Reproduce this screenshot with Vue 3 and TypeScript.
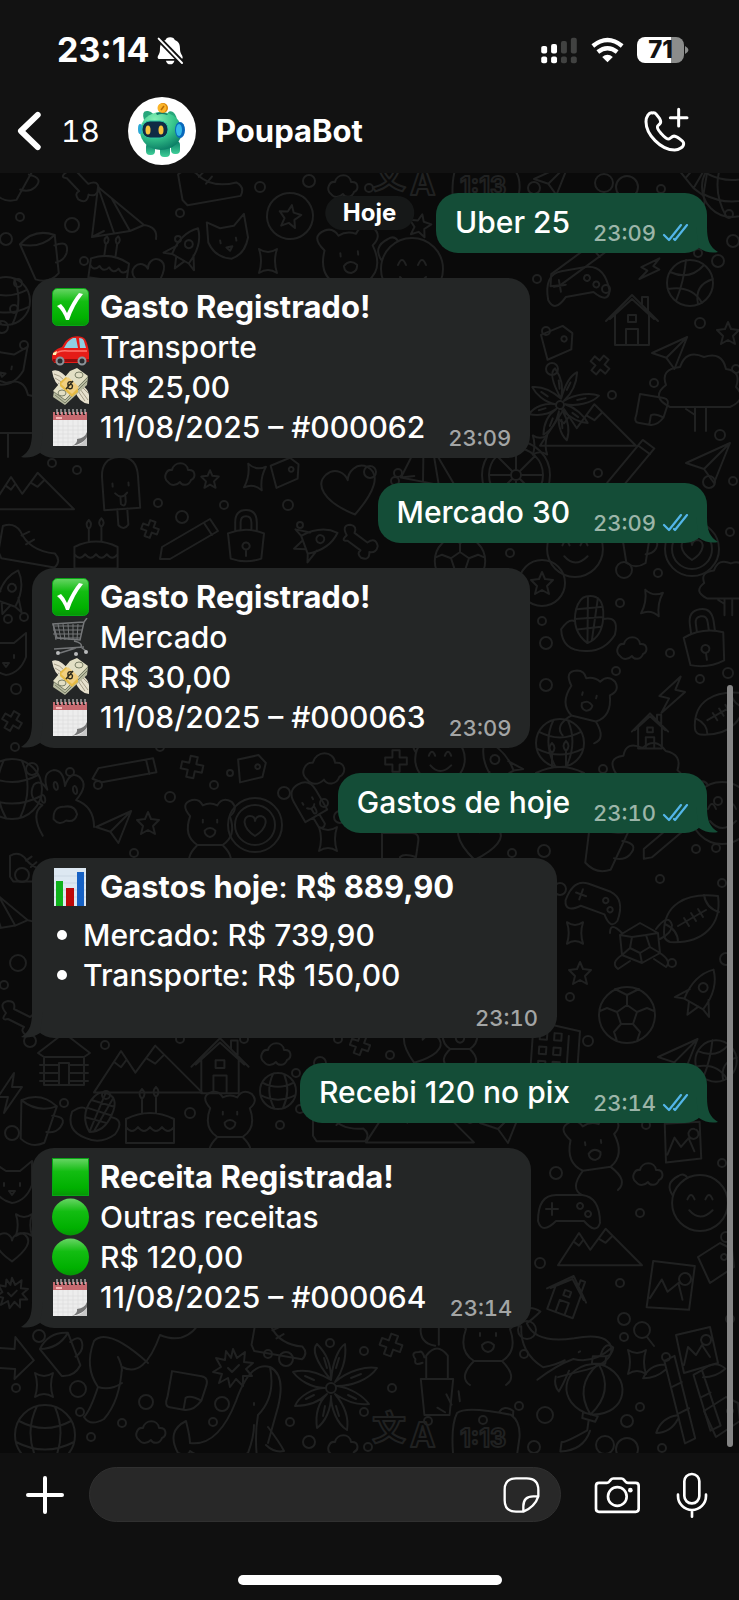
<script setup lang="ts">
import { ref } from 'vue'

type IconName = 'check' | 'car' | 'money' | 'calendar' | 'cart' | 'chart' | 'square' | 'circle'
interface Line { icon: IconName; text: string; bold?: boolean; amount?: string }
interface Message { id: number; out: boolean; time: string; text?: string; lines?: Line[]; items?: string[] }

const iconLabels: Record<IconName, string> = {
  check: 'Confirmado', car: 'Carro', money: 'Dinheiro', calendar: 'Data',
  cart: 'Carrinho', chart: 'Gráfico', square: 'Quadrado verde', circle: 'Círculo verde',
}

const draft = ref('')

const messages: Message[] = [
  { id: 1, out: true, time: '23:09', text: 'Uber 25' },
  { id: 2, out: false, time: '23:09', lines: [
    { icon: 'check', text: 'Gasto Registrado!', bold: true },
    { icon: 'car', text: 'Transporte' },
    { icon: 'money', text: 'R$ 25,00' },
    { icon: 'calendar', text: '11/08/2025 – #000062' },
  ] },
  { id: 3, out: true, time: '23:09', text: 'Mercado 30' },
  { id: 4, out: false, time: '23:09', lines: [
    { icon: 'check', text: 'Gasto Registrado!', bold: true },
    { icon: 'cart', text: 'Mercado' },
    { icon: 'money', text: 'R$ 30,00' },
    { icon: 'calendar', text: '11/08/2025 – #000063' },
  ] },
  { id: 5, out: true, time: '23:10', text: 'Gastos de hoje' },
  { id: 6, out: false, time: '23:10',
    lines: [{ icon: 'chart', text: 'Gastos hoje', bold: true, amount: 'R$ 889,90' }],
    items: ['Mercado: R$ 739,90', 'Transporte: R$ 150,00'] },
  { id: 7, out: true, time: '23:14', text: 'Recebi 120 no pix' },
  { id: 8, out: false, time: '23:14', lines: [
    { icon: 'square', text: 'Receita Registrada!', bold: true },
    { icon: 'circle', text: 'Outras receitas' },
    { icon: 'circle', text: 'R$ 120,00' },
    { icon: 'calendar', text: '11/08/2025 – #000064' },
  ] },
]

// Wallpaper drawings, each centred on its own origin
const shapes: Record<string, string> = {
  sparkle: 'M-9 -12Q0 -6 9 -12Q5 0 9 12Q0 6 -9 12Q-5 0 -9 -12Z',
  burst: 'M0 -19L4 -10L12 -16L11 -6L20 -5L13 1L19 8L10 8L10 18L3 11L-3 19L-5 10L-14 15L-11 6L-20 4L-12 -1L-17 -10L-8 -8L-7 -17L-2 -10ZM-5 0l4 4l7 -7',
  cloud: 'M-12 9c-6 -5 -1 -13 4 -12c2 -9 15 -9 16 0c8 -1 8 8 3 10c-2 6 -9 6 -11 2c-4 4 -9 4 -12 0Z',
  star: 'M0 -11L3 -4L11 -3L5 3L7 11L0 7L-7 11L-5 3L-11 -3L-3 -4Z',
  heart: 'M0 24C-30 4 -32 -14 -20 -21C-9 -27 -1 -18 0 -11C2 -19 12 -27 22 -20C34 -10 24 6 0 24Z',
  cup: 'M-18 -18Q0 -30 18 -18L12 20Q0 28 -12 20ZM-18 -18Q0 -8 18 -18M15 -8q16 -2 10 10q-4 7 -13 7',
  globe: 'M30 0A30 30 0 1 1 -30 0A30 30 0 1 1 30 0ZM-26 -14Q0 0 26 -14M-29 7Q0 22 29 7M-8 -29Q-22 0 -6 29M10 -28Q22 0 8 29',
  ball: 'M28 0A28 28 0 1 1 -28 0A28 28 0 1 1 28 0ZM0 -10L10 -3L6 9L-6 9L-10 -3ZM0 -10V-20L-12 -26M0 -20L12 -26M10 -3L20 -7L27 -4M6 9L13 17L10 26M-6 9L-13 17L-10 26M-10 -3L-20 -7L-27 -4',
  basket: 'M23 0A23 23 0 1 1 -23 0A23 23 0 1 1 23 0ZM-20 -11Q0 -2 14 -18M-14 18Q-6 -2 -4 -23M8 21Q4 2 23 -4M-22 6Q2 2 12 20',
  flower: 'M0 -8C-18 -30 -18 -40 -14 -44C-4 -34 0 -24 0 -8C2 -28 8 -40 14 -44C16 -28 10 -14 4 -6C18 -18 36 -22 46 -20C38 -8 20 -2 6 -2C20 0 32 8 38 16C24 18 10 10 4 6C14 18 18 30 16 42C6 36 0 20 0 8C0 22 -6 34 -14 40C-16 26 -12 14 -4 6C-12 14 -24 18 -36 18C-32 8 -18 0 -6 0C-20 0 -32 -8 -38 -16C-24 -20 -10 -14 0 -8M5 0A5 5 0 1 1 -5 0A5 5 0 1 1 5 0M-7 -30L-4 -20M8 -30L5 -20M30 -14L20 -10M25 11L17 7M8 28L5 18M-8 28L-6 18M-25 11L-17 7M-26 -12L-17 -8',
  house: 'M-22 -4L0 -24L22 -4M-17 -8V22H17V-8M-26 -2L0 -28L26 -2M-6 22V6H6V22M-4 -8H4V-1H-4ZM10 -18V-26H16V-10',
  cabin: 'M-26 -10L0 -30L26 -10L20 -6H-20ZM-20 -6V22H20V-6M-24 2H-6M-24 10H-6M-24 18H-6M6 2H24M6 10H24M6 18H24M-5 22V0H5V22',
  mountain: 'M-60 26L-30 -20L-14 4L8 -26L60 26ZM-38 -8L-30 -2L-24 -10M-2 -12L8 -6L18 -16',
  popsicle: 'M-18 18V-14Q-18 -34 0 -34Q18 -34 18 -14V18ZM-5 18V34Q0 40 5 34V18M-8 -8v3M8 -8v3M-6 2Q0 9 6 2M-1 6v7q4 4 5 -2v-7',
  turtle: 'M0 -20L18 -10L20 10L2 20L-18 12L-20 -8ZM-8 -6L6 -8L10 4L0 10L-10 5ZM-8 -6L-20 -8M6 -8L18 -10M10 4L20 10M0 10L2 20M-10 5L-18 12M16 -14Q28 -30 32 -18Q32 -10 20 -4M-18 -10Q-30 -22 -30 -10M20 10Q32 18 26 24L14 16M-18 12Q-30 20 -22 26L-10 18',
  rugby: 'M-28 14C-28 -12 -8 -26 26 -22C30 6 12 26 -22 24C-28 22 -28 18 -28 14ZM-14 8L14 -8M-8 0l5 8M-1 -5l5 8M6 -9l5 8M-27 6Q-14 12 -14 24M12 -23Q14 -10 27 -6',
  corn: 'M-6 -28Q12 -34 14 -10Q16 10 2 18Q-16 8 -14 -14Q-12 -26 -6 -28ZM-13 -14L12 -20M-14 -4L14 -10M-10 6L13 0M-4 -28L2 18M6 -28L6 14M14 -8Q30 -14 28 6Q20 24 2 26Q-22 30 -26 8Q-20 -4 -14 -2',
  lock: 'M-20 -4Q0 -12 20 -4L17 24Q0 30 -17 24ZM-12 -7V-16Q-12 -30 0 -30Q12 -30 12 -16V-7M-6 -8V-16Q-6 -23 0 -23Q6 -23 6 -16V-9M0 6a4 4 0 1 0 .1 0M0 14v7',
  paw: 'M-26 30Q-34 6 -20 0Q-34 -10 -24 -22Q-16 -26 -12 -14Q-14 -32 -2 -32Q8 -30 6 -14Q14 -28 22 -20Q30 -10 14 2Q30 12 26 32M-12 16Q-10 4 0 6Q12 6 12 16Q8 24 0 20Q-8 24 -12 16M-18 -10a2 4 0 1 0 .1 0M-3 -20a2 4 0 1 0 .1 0M15 -12a2 4 0 1 0 .1 0',
  badge: 'M27 0A27 27 0 1 1 -27 0A27 27 0 1 1 27 0ZM20 0A20 20 0 1 1 -20 0A20 20 0 1 1 20 0ZM0 11C-14 2 -12 -9 -5 -9Q0 -9 0 -4Q1 -9 6 -9C13 -8 13 3 0 11Z',
  starring: 'M23 0A23 23 0 1 1 -23 0A23 23 0 1 1 23 0ZM0 -11L3 -4L11 -3L5 3L7 11L0 7L-7 11L-5 3L-11 -3L-3 -4Z',
  bear: 'M-22 -12Q-34 -26 -20 -30Q-12 -32 -8 -24Q0 -28 8 -24Q14 -34 24 -28Q32 -20 22 -12Q30 10 14 20H-14Q-30 10 -22 -12ZM-8 -8v3M8 -8v3M-6 4Q0 -2 6 4Q6 10 0 11Q-6 10 -6 4ZM-14 20Q-30 36 -18 44M14 20Q30 36 18 44',
  lantern: 'M-6 -34L8 -36L8 -28L-6 -26ZM1 -27C-40 -22 -38 22 0 27C40 24 40 -22 1 -27ZM1 -27Q-22 0 0 27M1 -27Q22 0 0 27M-8 26L8 28L6 34L-8 32ZM2 -36Q4 -52 14 -46Q14 -38 8 -36M-1 34V44Q-22 60 -26 60V70Q-2 66 2 44',
  bamboo: 'M-12 -40L0 -44L10 50L-2 54ZM-8 -10L4 -14M-4 20L8 16M18 -20L28 -24L40 40L28 44ZM22 6L34 2M-12 -36Q-30 -38 -38 -24Q-24 -22 -12 -30M-6 22Q-24 22 -32 38Q-16 40 -6 26M28 -24Q44 -34 54 -22Q42 -14 28 -16',
  photo: 'M-20 -14L14 -22L22 14L-12 24ZM-12 16L-8 -2L0 6L6 -4L14 8M10 -14a5 5 0 1 0 .1 0',
  whale: 'M-50 36Q-62 14 -42 4Q-38 20 -38 26Q-10 30 8 -16Q22 -56 42 -50Q58 -42 50 -10Q46 4 40 26M-50 36Q-40 40 -38 34Q-10 52 20 36Q26 20 26 8M30 50Q26 20 30 -2M40 10Q52 26 56 34Q46 36 38 28M42 -50Q48 -20 30 -2M26 -14v2',
  cactus: 'M-18 0H18L14 40H-14ZM-12 0V-26Q0 -42 12 -26V0M-2 -37Q-20 -40 -18 -58Q-8 -72 2 -58V-38M-16 -18Q-26 -14 -24 -22Q-30 -30 -20 -30Q-16 -32 -14 -24',
  legs: 'M-30 -30Q-40 -4 -26 16Q-34 40 -40 46Q-34 56 -20 48Q-4 30 -2 -4Q20 8 36 -36Q60 -26 74 -46M-30 -30Q-16 -44 24 -8M-26 16Q-14 20 -2 12M-6 -14Q-2 -6 -2 0',
  arrow: 'M-20 -8H0V-20L20 2L2 22V12H-20',
  rocket: 'M0 -30Q16 -14 12 14H-12Q-16 -14 0 -30ZM-12 2L-22 18L-12 14M12 2L22 18L12 14M-6 14L0 28L6 14M0 -12a5 5 0 1 0 .1 0',
  hat: 'M-30 20L-24 -30L22 8L8 14ZM-24 -30L-8 16M-10 -18L8 14M-30 20L-18 14M22 8Q36 10 34 22',
  bone: 'M-16 -6q-8 -10 2 -12q8 0 6 8L8 -2q8 -8 12 2q0 8 -8 8q2 10 -8 8q-6 -4 -2 -8L-14 0q-8 2 -2 -6Z',
  pencil: 'M-30 10L18 -18L26 -6L-22 22L-32 22ZM12 -14L20 -2',
  tree: 'M-30 22Q-50 12 -34 0Q-40 -16 -20 -18Q-14 -36 4 -28Q22 -34 26 -16Q42 -14 36 2Q48 14 30 22ZM-5 22V46M6 22V46M-5 30L-14 24',
  wheel: 'M34 0A34 34 0 1 1 -34 0A34 34 0 1 1 34 0ZM27 0A27 27 0 1 1 -27 0A27 27 0 1 1 27 0ZM5 0A5 5 0 1 1 -5 0A5 5 0 1 1 5 0ZM0 -5V-27M0 5V27M5 0H27M-5 0H-27M4 -4L19 -19M-4 4L-19 19M4 4L19 19M-4 -4L-19 -19',
  face: 'M31 0A31 31 0 1 1 -31 0A31 31 0 1 1 31 0ZM-14 -4q4 -10 8 0M6 -4q4 -10 8 0M-12 8Q0 22 14 8M-30 -8Q-40 -22 -24 -30Q-18 -34 -14 -28',
  fox: 'M-18 -20L-6 -12H8L20 -22L20 2Q14 18 0 20Q-16 16 -20 0ZM-8 0v3M8 0v3M-3 8h6l-3 4Z',
  building: 'M-26 40V-34L26 -26V40M-18 -22h8v8h-8ZM-2 -22h8v8h-8ZM-18 -6h8v8h-8ZM-2 -6h8v8h-8ZM-18 10h8v8h-8ZM-2 10h8v8h-8ZM14 -20v50',
  cake: 'M-24 24V0Q0 -12 24 0V24ZM-24 8q6 8 12 0q6 8 12 0q6 8 12 0q6 8 12 0M-8 -6V-20M6 -6V-22M-8 -20q-5 -5 0 -10q5 5 0 10M6 -22q-5 -5 0 -10q5 5 0 10',
  bolt: 'M4 -20L-12 4H-2L-6 20L12 -6H2Z',
  cross: 'M-4 -12H4V-4H12V4H4V12H-4V4H-12V-4H-4Z',
  tag: 'M-18 -6L4 -20L16 -14L18 4L-6 20ZM8 -9a3 3 0 1 0 .1 0',
  glass: 'M6 0A8 8 0 1 1 -10 0A8 8 0 1 1 6 0ZM3 7L10 16',
  clock: 'M-28 34Q-34 0 -28 -14Q-20 -22 26 -16Q36 -10 36 6L34 34M14 -18q4 -8 14 -2v5M-40 -14l-8 -4M-34 -22l-6 -10M-26 -26l-2 -10',
  note: 'M-18 -16H12Q20 -16 18 -6L16 8Q10 20 0 20H-14Q-20 20 -18 10ZM0 20V8Q4 4 16 8',
  controller: 'M-30 10Q-30 -16 -12 -16H14Q32 -14 32 12Q28 24 16 10H-12Q-26 24 -30 10ZM-16 -8v12M-22 -2h12M12 -8a3 3 0 1 0 .1 0M20 0a3 3 0 1 0 .1 0',
  plane: 'M-20 0L24 -20L8 20L-2 6ZM-2 6L24 -20',
  shoe: 'M-30 12V-14Q-20 -20 -12 -12Q0 6 26 4Q34 10 28 18H-26ZM-10 -8l7 -5M-4 0l7 -6',
}

type Doodle = [string, number, number, number, number]
const doodles: Doodle[] = [
  // upper rows
  ['cup', 12, 4, 1, 20], ['hat', 122, 44, 1, 0], ['cloud', 343, 12, 1, 0], ['starring', 290, 43, 1, 10],
  ['shoe', 210, 10, 1, -10], ['cup', 42, 84, 1, -15], ['fox', 228, 66, 1, -10], ['star', 420, 52, 1, 12],
  ['bone', 80, 10, 1, 20], ['face', 412, 96, 1, 0], ['bear', 350, 88, 1.1, -6], ['pencil', 580, 88, 1, -6],
  ['basket', 690, 110, 1, 0], ['bolt', 650, 96, .7, 30], ['heart', 150, 102, .6, -18], ['cake', 110, 88, .8, 8],
  ['hat', 700, 4, .8, 60], ['plane', 550, 6, .8, 0], ['globe', 732, 14, 1, 0], ['sparkle', 268, 88, 1, 0], ['rocket', 186, 76, .8, 30],
  ['globe', 6, 128, .8, 0], ['fox', 4, 192, 1, 10], ['tree', 2, 238, 1, 0],
  ['controller', 576, 112, 1, -10], ['house', 632, 150, 1, 0], ['cross', 600, 192, .8, 40], ['tag', 556, 170, .9, 10],
  ['tree', 700, 212, 1, 0], ['mountain', 588, 252, .8, 0], ['flower', 560, 232, .8, 10], ['note', 652, 236, .8, 10],
  ['sparkle', 540, 272, .8, 0], ['plane', 668, 180, .8, 0], ['star', 728, 160, 1, 0],
  // beside the second message
  ['popsicle', 121, 318, 1, -4], ['mountain', 32, 318, .7, 0], ['cloud', 180, 300, 1, 0], ['sparkle', 255, 304, 1, 10],
  ['heart', 350, 318, 1, -12], ['tag', 284, 300, .8, 10], ['star', 210, 306, .8, 0], ['lock', 246, 364, .9, 0],
  ['pencil', 192, 364, 1, 0], ['rocket', 315, 368, .8, 70], ['wheel', 516, 302, 1, 0], ['hat', 436, 296, 1, 20],
  ['pencil', 632, 290, 1, -20], ['plane', 706, 290, 1, 0], ['shoe', 30, 372, 1, 10], ['cake', 96, 374, .9, 0],
  ['cross', 150, 356, .7, 20], ['ball', 460, 388, .9, 0], ['face', 575, 376, .9, 0], ['badge', 692, 376, 1, 0],
  ['rocket', 10, 420, .8, 20], ['bone', 360, 370, .9, 10], ['starring', 542, 410, 1, 0], ['cup', 636, 374, .8, 0],
  ['corn', 588, 452, 1, 8], ['lock', 704, 466, 1, -8], ['sparkle', 652, 430, 1, 10], ['cloud', 632, 474, 1, 0],
  ['bolt', 672, 522, 1, 14], ['rugby', 720, 540, .9, 0], ['bear', 588, 528, .9, 14], ['house', 650, 560, .7, 0],
  ['globe', 560, 570, .8, 0], ['fox', 6, 482, 1, 0], ['cross', 12, 548, .8, 30], ['tree', 728, 410, .7, 0],
  // middle rows
  ['paw', 62, 628, 1, -12], ['globe', 12, 616, 1, 0], ['pencil', 130, 596, 1, 20], ['cross', 192, 594, .9, 12],
  ['tag', 250, 596, .8, 20], ['bear', 210, 654, .9, 0], ['badge', 255, 652, 1, 0],
  ['cloud', 324, 594, 1.4, 0], ['sparkle', 328, 666, 1, 0], ['popsicle', 310, 632, .7, -30], ['plane', 112, 654, .8, 0],
  ['star', 148, 650, 1, 0], ['cross', 396, 588, .9, 0], ['face', 440, 586, .8, 0], ['rocket', 498, 592, .9, -30],
  ['cake', 560, 600, 1, 0], ['tree', 650, 598, .9, 30], ['cup', 604, 672, 1.1, 16], ['face', 722, 640, 1, 0],
  ['pencil', 666, 664, .8, -10], ['shoe', 34, 694, .8, 0], ['hat', 8, 740, .9, 0], ['note', 400, 676, 1, 0],
  ['heart', 478, 668, .8, 10], ['rugby', 692, 745, 1, 0], ['turtle', 640, 770, 1, 0], ['controller', 594, 728, .9, 20],
  ['ball', 627, 842, 1, 0], ['star', 580, 800, 1, 0], ['building', 555, 880, .9, 4], ['rocket', 700, 820, .9, 30],
  ['basket', 716, 888, .9, 0], ['sparkle', 575, 760, .9, 0], ['bone', 22, 846, 1, 0], ['plane', 676, 884, .9, 0],
  ['cabin', 64, 890, 1, 0], ['mountain', 148, 896, .9, 0], ['house', 220, 896, 1.1, 0], ['cloud', 276, 880, 1, 0],
  ['cross', 360, 872, .8, 20], ['globe', 278, 918, .6, 0], ['heart', 420, 874, .7, 20], ['bear', 460, 862, .7, 0],
  ['bolt', 10, 920, 1, 0], ['cake', 150, 946, 1, 0], ['bear', 230, 946, .9, 0], ['cup', 36, 948, 1, 10],
  ['corn', 96, 944, .9, 30], ['mountain', 420, 946, .9, 0], ['shoe', 340, 952, .9, 0], ['plane', 500, 950, 1, 0],
  // lower rows
  ['bear', 594, 976, 1, -8], ['photo', 682, 968, 1, 10], ['face', 700, 1030, .9, 0], ['controller', 568, 1038, 1, 0],
  ['mountain', 600, 1074, .7, 0], ['cloud', 648, 1000, 1, 0], ['fox', 12, 1010, 1, 0], ['heart', 12, 1074, .6, 0],
  ['house', 566, 1124, .8, 20], ['photo', 670, 1112, 1.2, 20], ['sparkle', 24, 1052, .9, 0], ['burst', 12, 1120, .8, 0],
  ['whale', 560, 1166, .8, 60], ['tag', 716, 1090, 1, 0],
  ['arrow', 14, 1184, 1, 4], ['cup', 62, 1182, .9, -30], ['legs', 124, 1198, 1, 0], ['note', 187, 1217, 1, 10],
  ['burst', 233, 1195, 1, 0], ['sparkle', 44, 1212, 1, 0], ['whale', 228, 1244, 1, 0], ['flower', 331, 1215, 1, 0],
  ['cross', 391, 1172, .9, 20], ['cactus', 437, 1206, .9, 0], ['lantern', 594, 1216, .95, 8], ['sparkle', 637, 1189, 1, 0],
  ['bamboo', 680, 1222, .9, -8], ['photo', 696, 1176, 1, 0], ['glass', 644, 1157, 1, 0], ['globe', 45, 1262, 1, 0],
  ['cloud', 151, 1258, 1, 0], ['cloud', 343, 1272, 1, 0], ['shoe', 280, 1166, .9, 10], ['clock', 484, 1256, 1, 4],
  ['bear', 488, 1168, 1, 0], ['clock', 484, 8, 1, 4], ['tag', 722, 1244, 1, 0],
]

const dots: [number, number, number][] = [
  [309, 8, 6], [369, 15, 4], [534, 15, 6], [604, 10, 9], [627, 14, 11], [661, 16, 4], [729, 41, 4], [733, 68, 6], [698, 80, 4],
  [718, 88, 6], [537, 106, 4], [260, 14, 5], [180, 40, 4], [72, 52, 7], [20, 44, 4], [6, 66, 6], [178, 66, 3], [84, 88, 4],
  [18, 110, 4], [14, 136, 4], [2, 154, 6], [24, 172, 4], [546, 158, 4], [606, 116, 4], [700, 150, 5], [654, 210, 4], [736, 196, 4],
  [612, 222, 4], [552, 196, 6], [720, 262, 5], [52, 290, 4], [77, 297, 4], [158, 330, 4], [182, 344, 6], [224, 332, 4], [288, 332, 5],
  [300, 352, 3], [395, 308, 4], [370, 299, 6], [398, 300, 4], [598, 300, 4], [709, 309, 6], [733, 308, 4], [730, 359, 4], [510, 380, 4],
  [624, 397, 8], [658, 400, 4], [542, 448, 4], [546, 470, 6], [620, 430, 4], [670, 480, 4], [728, 500, 5], [616, 498, 4], [546, 512, 6],
  [700, 506, 4], [8, 446, 4], [24, 444, 4], [16, 516, 5], [15, 574, 4], [32, 596, 6], [70, 599, 4], [160, 574, 4], [214, 612, 4],
  [284, 620, 6], [98, 612, 4], [170, 624, 5], [134, 680, 4], [324, 630, 4], [340, 644, 6], [230, 600, 3], [603, 596, 4], [718, 628, 4],
  [544, 678, 6], [696, 676, 4], [716, 675, 4], [512, 680, 4], [22, 702, 7], [18, 790, 8], [4, 812, 4], [560, 716, 6], [660, 706, 4],
  [722, 710, 4], [570, 824, 4], [588, 868, 5], [672, 790, 4], [726, 786, 6], [30, 868, 6], [105, 872, 4], [244, 866, 4], [106, 922, 4],
  [180, 866, 4], [320, 890, 6], [296, 900, 4], [338, 866, 4], [390, 882, 4], [190, 940, 5], [64, 930, 4], [280, 952, 4], [300, 936, 4],
  [376, 940, 5], [470, 946, 4], [536, 944, 4], [12, 960, 7], [646, 952, 4], [556, 1000, 6], [640, 1040, 4], [722, 990, 4], [540, 1090, 5],
  [620, 1110, 4], [726, 1064, 5], [730, 1146, 4], [624, 1146, 6], [39, 1163, 6], [78, 1216, 8], [16, 1215, 4], [146, 1229, 7],
  [222, 1231, 7], [268, 1181, 4], [286, 1186, 7], [330, 1170, 4], [364, 1178, 4], [392, 1215, 4], [519, 1233, 4], [545, 1242, 8],
  [483, 1247, 4], [627, 1248, 6], [524, 1181, 4], [527, 1157, 9], [624, 1164, 4], [666, 1184, 4], [640, 1234, 4], [309, 1269, 6],
  [213, 1249, 4], [122, 1250, 4], [80, 1239, 4], [91, 1264, 4], [534, 1274, 6], [605, 1272, 9], [627, 1276, 11], [662, 1275, 4],
  [290, 1249, 4], [364, 1239, 4], [428, 1248, 4], [368, 1274, 4],
]
</script>

<template>
  <div class="phone">
    <header class="top">
      <div class="status">
        <span class="clock">23:14</span>
        <svg class="bell" width="27" height="29" viewBox="470 105 82 86" aria-hidden="true">
          <path fill="#fff" d="M510 108c-8 0-13 4-14 8c-14 5-17 16-17 30c0 14-7 16-7 24q0 4 5 4h66q5 0 5-4c0-8-8-12-8-24c0-16-3-25-16-30c-1-4-6-8-14-8zM497 179h26q-3 11-13 11t-13-11z" />
          <path stroke="#121212" stroke-width="17" d="M470 107L552 191" />
          <path stroke="#fff" stroke-width="6" stroke-linecap="round" d="M475 112L546 186" />
        </svg>
        <div class="indicators">
          <svg width="38" height="27" viewBox="513 106 114 82" aria-hidden="true">
            <g fill="#fff"><rect x="516" y="133" width="18" height="23" rx="6" /><rect x="546" y="127" width="18" height="29" rx="6" /><rect x="516" y="165" width="18" height="21" rx="6" /><rect x="546" y="165" width="18" height="21" rx="6" /></g>
            <g fill="#414241"><rect x="576" y="118" width="18" height="38" rx="6" /><rect x="606" y="108" width="18" height="48" rx="6" /><rect x="576" y="165" width="18" height="21" rx="6" /><rect x="606" y="165" width="18" height="21" rx="6" /></g>
          </svg>
          <svg class="wifi" width="33" height="26" viewBox="666 108 98 78" aria-hidden="true">
            <g fill="none" stroke="#fff" stroke-width="13"><path d="M671 135Q715 99 759 135" /><path d="M686 153Q715 130 744 153" /></g>
            <path fill="#fff" d="M715 184L699 168Q715 155 731 168Z" />
          </svg>
          <div class="battery">71</div>
          <svg width="5" height="8" viewBox="0 0 5 8" aria-hidden="true"><path fill="#8b8c8b" d="M1 0Q8 4 1 8Z" /></svg>
        </div>
      </div>
      <div class="nav">
        <button class="back" type="button" aria-label="Voltar, 18 não lidas">
          <svg width="25" height="40" viewBox="50 334 76 120" aria-hidden="true"><path fill="none" stroke="#fff" stroke-width="18" stroke-linecap="round" stroke-linejoin="round" d="M113 345L62 394L113 443" /></svg>
          <span>18</span>
        </button>
        <svg class="avatar" width="68" height="68" viewBox="0 0 68 68" role="img" aria-label="PoupaBot">
          <defs>
            <radialGradient id="body" cx=".35" cy=".2" r=".85"><stop offset="0" stop-color="#85f0b5" /><stop offset=".55" stop-color="#36c58b" /><stop offset="1" stop-color="#087963" /></radialGradient>
            <linearGradient id="leg" x2="0" y2="1"><stop stop-color="#087a63" /><stop offset="1" stop-color="#3fcf98" /></linearGradient>
          </defs>
          <circle cx="34" cy="34" r="34" fill="#fff" />
          <g fill="url(#leg)"><rect x="43" y="44" width="9" height="13" rx="4" /><rect x="18" y="46" width="9" height="12" rx="4" /><rect x="32" y="47" width="10" height="13" rx="4" /></g>
          <path fill="#27a77b" d="M16 23Q13 13 20 14Q25 15 27 20ZM38 20Q40 12 45 15Q50 19 48 26Z" />
          <ellipse cx="33" cy="34" rx="21" ry="19" fill="url(#body)" />
          <path fill="#137a65" d="M28 16Q34 14 40 17L39 18Q34 16 29 18Z" />
          <ellipse cx="52" cy="33" rx="5" ry="8" fill="#0868bb" /><ellipse cx="51" cy="33" rx="3" ry="6" fill="#35b8e7" />
          <ellipse cx="12" cy="32" rx="2" ry="5" fill="#2ca8d5" />
          <rect x="14" y="24" width="26" height="17" rx="8" fill="#102b45" stroke="#2bc3a2" />
          <ellipse cx="20" cy="33" rx="2.5" ry="4.5" fill="#f7c33e" /><ellipse cx="33" cy="33" rx="2.5" ry="4.5" fill="#f7c33e" />
          <circle cx="35" cy="11" r="5" fill="#d98607" /><circle cx="34" cy="11" r="4.5" fill="#fbb429" /><path stroke="#b96d06" stroke-width="1.5" d="M33 13L36 9" />
        </svg>
        <h1>PoupaBot</h1>
        <button class="call" type="button" aria-label="Ligar">
          <svg width="45" height="45" viewBox="825 318 135 135" aria-hidden="true">
            <g fill="none" stroke="#fff" stroke-width="9" stroke-linecap="round" stroke-linejoin="round">
              <path d="M850 336C840 333 831 348 831 362C831 400 875 447 917 447C930 447 944 438 944 428C944 420 935 416 925 409C918 404 912 404 907 409L902 413C897 417 885 408 877 398C870 390 862 382 866 375L873 368C877 363 875 358 872 353L862 340C859 336 855 334 850 336Z" />
              <path d="M929 325V375M904 350H954" />
            </g>
          </svg>
        </button>
      </div>
    </header>

    <main class="chat">
      <svg class="wallpaper" viewBox="0 0 739 1280" preserveAspectRatio="xMidYMin slice" aria-hidden="true">
        <path v-for="(d, i) in doodles" :key="i" :d="shapes[d[0]]" :transform="`translate(${d[1]} ${d[2]}) rotate(${d[4]}) scale(${d[3]})`" />
        <circle v-for="(c, i) in dots" :key="'c' + i" :cx="c[0]" :cy="c[1]" :r="c[2]" />
        <g v-for="y in [18, 1270]" :key="y">
          <text x="372" :y="y - 3" font-size="34">文</text>
          <text x="410" :y="y + 4" font-size="34">A</text>
          <text x="460" :y="y + 4" font-size="25">1:13</text>
        </g>
      </svg>

      <div class="day">Hoje</div>

      <article v-for="m in messages" :key="m.id" class="bubble" :class="[m.out ? 'out' : 'in', { stacked: m.items }]">
        <svg class="tail" width="22" height="26" viewBox="0 0 22 26" aria-hidden="true"><path d="M11 0C11 14 14 20 22 25Q12 27 3 21L0 0Z" /></svg>
        <p v-if="m.text" class="text">{{ m.text }}</p>
        <div v-else class="body">
          <p v-for="(l, i) in m.lines" :key="i" class="line">
            <svg class="icon" width="37" height="38" viewBox="0 0 37 38" role="img" :aria-label="iconLabels[l.icon]">
              <template v-if="l.icon === 'check'">
                <rect x=".5" y=".5" width="36" height="37" rx="5" fill="url(#green)" stroke="#08a615" />
                <path fill="#fff" d="M5 18L9 16Q13 20 15 25Q21 12 27 5L31 6Q22 17 17 32H14Q11 23 5 18Z" />
              </template>
              <template v-else-if="l.icon === 'car'">
                <path fill="#e51c17" d="M0 29Q0 22 10 19Q14 11 20 9Q29 7 33 11Q36 16 37 25V32Q35 35 31 35H4Q0 35 0 29Z" />
                <path fill="#8fd0e2" d="M12 20Q16 12 21 10H24L26 20ZM27 10Q31 10 32 13L34 20H28Z" />
                <path fill="none" stroke="#ff746c" stroke-width="1.5" d="M3 26Q8 22 16 23H35" />
                <path fill="#920d0d" d="M1 31H37V34H1Z" /><path fill="#fff5b0" d="M1 25L5 23L4 27H1Z" />
                <g fill="#292b2e" stroke="#8d9398" stroke-width="2"><circle cx="8" cy="33" r="3.5" /><circle cx="30" cy="33" r="3.5" /></g>
              </template>
              <template v-else-if="l.icon === 'money'">
                <path fill="#e6e0cd" d="M0 3Q5 1 10 5L17 11L11 20Q2 17 0 3ZM23 23L31 18Q39 23 37 36Q27 35 23 23Z" />
                <path fill="none" stroke="#a49d87" d="M2 6Q8 7 13 13M3 10L11 15M6 15L11 18M26 23L33 33M28 21L36 32M31 20L36 25" />
                <path fill="#b7ba9f" d="M18 4L25 1L36 9L35 17L13 37L1 29L2 23Z" />
                <path fill="#e2dfc4" d="M18 3L25 0L36 8L13 32L1 23Z" />
                <g fill="none" stroke="#797f67"><path d="M2 24L13 32L36 9M3 27L13 35L35 13" /><ellipse cx="27" cy="7" rx="4" ry="3" /><ellipse cx="10" cy="25" rx="4" ry="3" /></g>
                <path fill="#e4ba45" d="M14 9L26 19V24L20 29L8 18V14Z" /><path fill="#f1cf80" d="M16 9L27 19L20 26L9 16Z" />
                <path fill="none" stroke="#2d2a1c" stroke-width="1.5" d="M20 14Q15 13 16 17Q22 15 20 20Q18 22 15 19M21 13L14 21" />
              </template>
              <template v-else-if="l.icon === 'calendar'">
                <path fill="#ededed" d="M1 4H35V38H1Z" /><path stroke="#d5d5d5" stroke-width=".5" d="M1 18H35M1 22H35M1 26H35M1 30H35M1 34H35M6 12V38M11 12V38M16 12V38M21 12V38M26 12V38M31 12V38" />
                <path fill="#c66a70" d="M1 4H35V12H1Z" /><path stroke="#f5b8b8" stroke-width="2" d="M4 10H10" />
                <path fill="none" stroke="#222" stroke-width="2" d="M4 3V7M8 3V7M12 3V7M16 3V7M20 3V7M24 3V7M28 3V7M32 3V7" />
                <path fill="none" stroke="#ddd" d="M5 1V6M9 1V6M13 1V6M17 1V6M21 1V6M25 1V6M29 1V6M33 1V6" />
                <path fill="#777" d="M20 38Q26 35 25 31Q33 30 35 24V30Q30 36 20 38Z" /><path fill="#c8c8c8" d="M23 38Q32 36 35 29V38Z" />
              </template>
              <template v-else-if="l.icon === 'cart'">
                <g fill="none" stroke="#747678" stroke-width="1"><path d="M1 8H31M1 12H30M1 16H30M3 20H29M1 6L4 22M6 6L9 22M11 6L13 22M16 6L17 22M21 6V22M26 6L25 22" /><path stroke-width="1.5" d="M35 0L32 4L28 22L5 20L1 6L32 4M22 23Q31 25 29 29L34 33M2 31L32 29M8 35L24 30" /></g>
                <g fill="#b9babb"><circle cx="6" cy="35" r="2" /><circle cx="24" cy="36" r="2" /><circle cx="34" cy="34" r="2" /></g>
              </template>
              <template v-else-if="l.icon === 'chart'">
                <path fill="#dde8f2" d="M2 0H34V38H2Z" /><path stroke="#bac8d7" stroke-width=".5" d="M2 8H34M2 15H34M2 22H34M2 29H34" />
                <path fill="#0fb21b" d="M4 13H11V38H4Z" /><path fill="#bd0909" d="M14 20H22V38H14Z" /><path fill="#1661c4" d="M25 4H32V38H25Z" />
              </template>
              <rect v-else-if="l.icon === 'square'" x=".5" y=".5" width="36" height="37" fill="url(#green)" stroke="#08a615" />
              <ellipse v-else cx="18.5" cy="19" rx="18.5" ry="18.5" fill="url(#green)" />
            </svg>
            <span><strong v-if="l.bold">{{ l.text }}</strong><template v-else>{{ l.text }}</template><template v-if="l.amount">: <strong>{{ l.amount }}</strong></template></span>
          </p>
          <ul v-if="m.items"><li v-for="item in m.items" :key="item">{{ item }}</li></ul>
        </div>
        <div class="meta">
          <time>{{ m.time }}</time>
          <svg v-if="m.out" width="27" height="18" viewBox="0 0 27 18" role="img" aria-label="Lida"><path fill="none" stroke="#53b5e8" stroke-width="2.2" stroke-linecap="round" stroke-linejoin="round" d="M2 11L7 16L19 1M12 15L13 16L25 1" /></svg>
        </div>
      </article>
      <div class="scroll"></div>
    </main>

    <footer>
      <form class="composer" @submit.prevent>
        <button type="button" aria-label="Anexar"><svg width="38" height="38" viewBox="0 0 38 38" aria-hidden="true"><path stroke="#fff" stroke-width="4" stroke-linecap="round" d="M19 2V36M2 19H36" /></svg></button>
        <div class="field">
          <input v-model="draft" type="text" aria-label="Mensagem" />
          <button type="button" aria-label="Figurinhas">
            <svg width="37" height="37" viewBox="402 107 111 111" aria-hidden="true"><path fill="none" stroke="#fff" stroke-width="7" stroke-linejoin="round" d="M441 114H473Q508 114 508 149V168Q498 199 463 214H441Q407 214 407 180V148Q407 114 441 114ZM463 213V198Q463 168 493 168H508" /></svg>
          </button>
        </div>
        <button class="camera" type="button" aria-label="Câmera">
          <svg width="47" height="38" viewBox="677 106 141 113" aria-hidden="true"><g fill="none" stroke="#fff" stroke-width="8" stroke-linejoin="round"><path d="M692 126H716Q721 126 724 121L727 117Q730 113 735 113H759Q764 113 767 117L771 122Q774 126 779 126H802Q811 126 811 135V204Q811 213 802 213H692Q683 213 683 204V135Q683 126 692 126Z" /><circle cx="747" cy="167" r="28" /></g><circle cx="786" cy="148" r="7" fill="#fff" /></svg>
        </button>
        <button class="mic" type="button" aria-label="Gravar áudio">
          <svg width="32" height="46" viewBox="920 90 96 138" aria-hidden="true"><g fill="none" stroke="#fff" stroke-width="8" stroke-linecap="round"><rect x="945" y="96" width="45" height="88" rx="22" /><path d="M926 158V162A42 42 0 0 0 1010 162V158M968 204V224" /></g></svg>
        </button>
      </form>
      <div class="home"></div>
    </footer>

    <svg class="defs" width="0" height="0" aria-hidden="true">
      <linearGradient id="green" x2="0" y2="1"><stop stop-color="#68d565" /><stop offset=".35" stop-color="#13bd12" /><stop offset=".8" stop-color="#00b000" /><stop offset="1" stop-color="#079507" /></linearGradient>
    </svg>
  </div>
</template>

<style>
body { margin: 0; background: #101010; }
</style>

<style scoped>
.phone { position: relative; display: flex; flex-direction: column; min-height: 100vh; background: #101010; color: #fff; font-family: Inter, "Liberation Sans", sans-serif; font-size: 30px; }
* { box-sizing: border-box; }
button { display: flex; align-items: center; padding: 0; border: 0; background: none; color: inherit; font: inherit; flex: none; }
p, h1, ul { margin: 0; padding: 0; }
svg { display: block; flex: none; }
.defs { position: absolute; }

.top { background: #121212; padding: 30px 50px 8px 17px; }
.status { display: flex; align-items: center; height: 40px; padding-left: 40px; }
.clock { font-size: 34px; font-weight: 700; line-height: 40px; }
.bell { margin-left: 8px; }
.indicators { display: flex; align-items: center; margin-left: auto; }
.wifi { margin-left: 13px; }
.battery { width: 47px; height: 26px; margin-left: 13px; border-radius: 8px; background: linear-gradient(90deg, #fff 34px, #8b8c8b 34px); color: #121212; font-size: 24px; font-weight: 800; line-height: 26px; text-align: center; }
.nav { display: flex; align-items: center; height: 68px; margin-top: 27px; }
.back { gap: 19px; font-variant-numeric: tabular-nums; width: 111px; }
h1 { margin-left: 20px; font-size: 31px; font-weight: 700; line-height: 36px; }
.call { margin: 0 0 4px auto; }

.chat { position: relative; flex: 1; display: flex; flex-direction: column; align-items: flex-start; gap: 25px; padding: 20px 32px 125px; background: #0a0a0a; overflow: hidden; }
.wallpaper { position: absolute; inset: 0; width: 100%; height: 100%; fill: none; stroke: #202121; stroke-width: 2; stroke-linejoin: round; stroke-linecap: round; }
.wallpaper path { vector-effect: non-scaling-stroke; }
.wallpaper text { font-family: Inter, "Noto Sans CJK SC", sans-serif; font-weight: 700; }
.day { position: absolute; top: 23px; left: 50%; transform: translateX(-50%); padding: 0 18px; border-radius: 17px; background: #161818; font-size: 24px; font-weight: 700; line-height: 34px; }
.bubble { position: relative; display: flex; align-items: flex-end; gap: 23px; max-width: 100%; padding: 9px 19px 11px 20px; border-radius: 22px; background: #242626; font-weight: 500; line-height: 40px; }
.out { align-self: flex-end; background: #144d37; padding: 9px 18px 11px 19px; }
.tail { position: absolute; bottom: 0; right: -11px; fill: #144d37; }
.in .tail { right: auto; left: -11px; transform: scaleX(-1); fill: #242626; }
.line { display: flex; align-items: center; gap: 11px; height: 40px; white-space: nowrap; }
strong { font-size: 31px; font-weight: 700; }
.stacked { flex-direction: column; align-items: stretch; gap: 14px; min-width: 525px; }
ul { list-style: none; margin-top: 8px; }
li { display: flex; align-items: center; gap: 16px; padding-left: 5px; }
li::before { content: ""; width: 10px; height: 10px; border-radius: 50%; background: #fff; }
.meta { display: flex; align-items: center; justify-content: flex-end; gap: 6px; font-size: 22px; font-variant-numeric: tabular-nums; font-weight: 500; line-height: 18px; color: #a3a5a5; }
.out .meta { color: #9cb5a9; }
.scroll { position: absolute; right: 6px; top: 40%; bottom: 6px; width: 6px; border-radius: 3px; background: #858585; }

footer { padding: 14px 0 15px; background: #101010; }
.composer { display: flex; align-items: center; height: 55px; padding: 0 31px 0 26px; }
.field { display: flex; align-items: center; flex: 1; min-width: 0; height: 55px; margin-left: 25px; padding: 0 20px 0 24px; border: 1px solid #303030; border-radius: 28px; background: #282828; }
input { flex: 1; min-width: 0; border: 0; outline: 0; background: none; color: #fff; font: inherit; }
.camera { margin-left: 33px; }
.mic { margin-left: 35px; }
.home { width: 264px; height: 10px; margin: 53px auto 0; border-radius: 5px; background: #fff; }
</style>
